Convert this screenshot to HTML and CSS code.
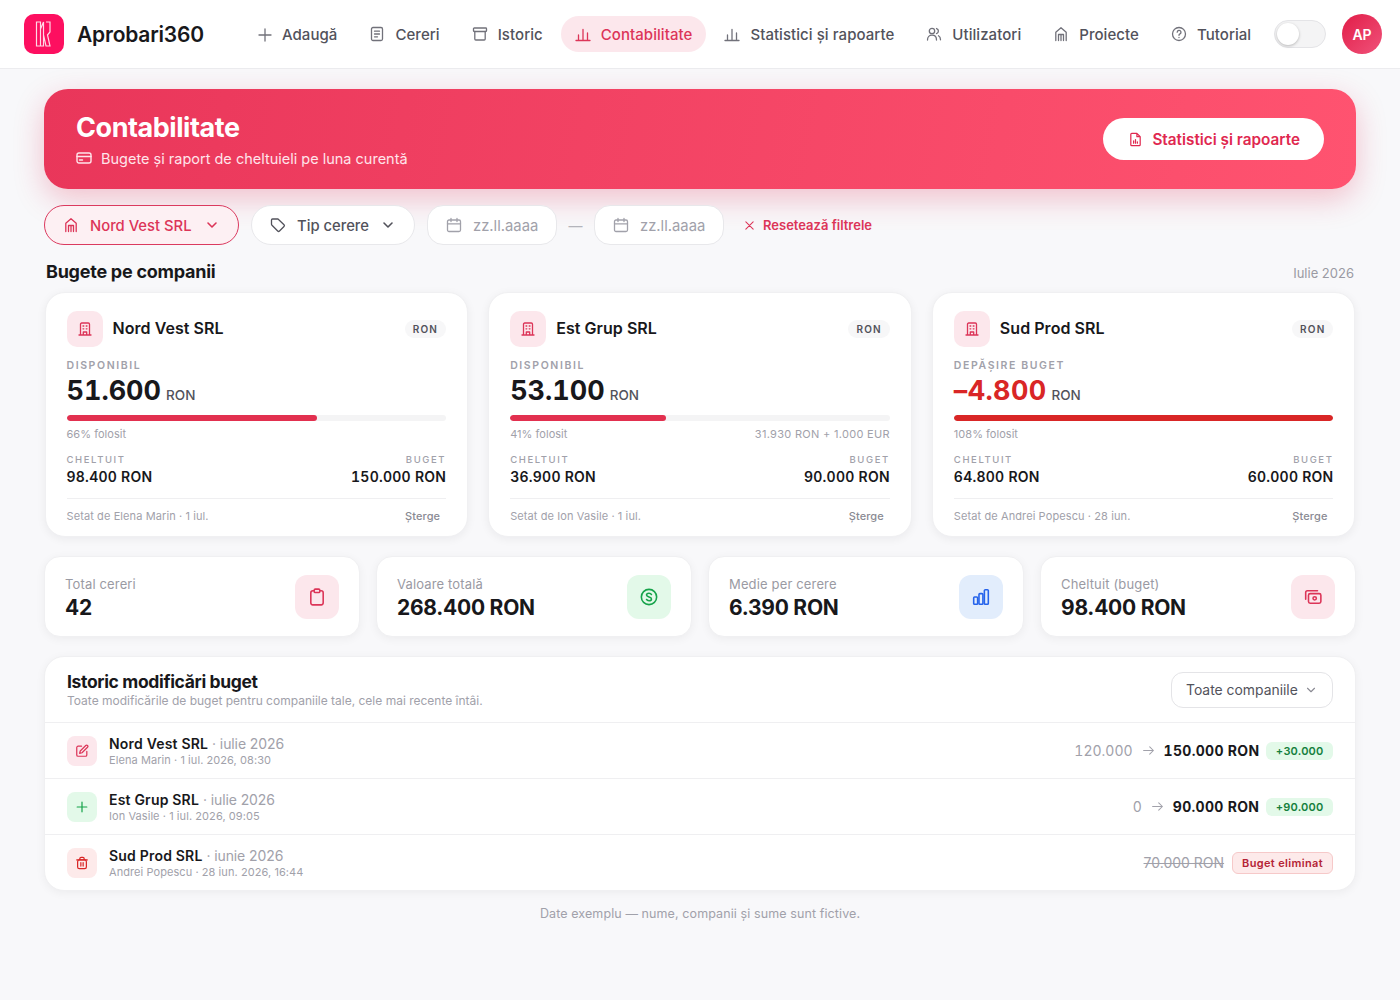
FILE: index.html
```html
<!DOCTYPE html>
<html lang="ro">
<head>
  <meta charset="UTF-8" />
  <meta name="viewport" content="width=device-width, initial-scale=1.0" />
  <title>Contabilitate - Aprobari360</title>
  <link rel="stylesheet" href="styles.css">
</head>
<body>
  <svg class="sprite" width="0" height="0">
    <symbol id="i-build" viewBox="0 0 16 16"><path d="M3.500 14V3.200c0-.7.500-1.200 1.200-1.200h6.600c.7 0 1.200.5 1.200 1.200V14M2 14h12M6.300 14v-3h3.400v3M6 5h.8M9.200 5h.8M6 7.800h.8M9.200 7.800h.8"/></symbol>
    <symbol id="i-proj" viewBox="0 0 16 16"><path d="M2.800 14.500V6.300L8 1.800l5.200 4.500v8.200M5.500 14.500V8.500h5v6M8 8.500v6"/></symbol>
    <symbol id="i-chart" viewBox="0 0 16 16"><path d="M1 14.500h14M3.500 14.500V9M8 14.500V3.500M12.500 14.500V7"/></symbol>
    <symbol id="i-cal" viewBox="0 0 16 16"><rect x="1.500" y="3" width="13" height="11.500" rx="1.500"/><path d="M1.500 6.800h13M5 1.500v3M11 1.500v3"/></symbol>
    <symbol id="i-chev" viewBox="0 0 16 16"><path d="M4 6l4 4 4-4"/></symbol>
  </svg>

  <header class="topbar">
    <a class="brand">
      <span class="brand-logo">
        <svg viewBox="0 0 28 28" width="28" height="28"><path d="M6.500 2h4v24h-4zM10.500 9l3-7v24h-3M16 2h4v10l-2.500 3 2.500 11h-4l-2.500-11V2"/></svg>
      </span>
      <span class="brand-name">Aprobari360</span>
    </a>
    <nav class="nav">
      <a class="nav-item"><svg class="ico" viewBox="0 0 16 16"><path d="M9 3v12M3 9h12"/></svg>Adaugă</a>
      <a class="nav-item"><svg class="ico" viewBox="0 0 16 16"><rect x="2.500" y="1.500" width="11" height="13" rx="1.500"/><path d="M5.500 5.200h5M5.500 8h5M5.500 10.800h3"/></svg>Cereri</a>
      <a class="nav-item"><svg class="ico" viewBox="0 0 16 16"><rect x="1.500" y="2" width="13" height="3.500" rx=".8"/><path d="M2.800 5.500V13c0 .6.400 1 1 1h8.400c.6 0 1-.4 1-1V5.500"/></svg>Istoric</a>
      <a class="nav-item active"><svg class="ico"><use href="#i-chart"/></svg>Contabilitate</a>
      <a class="nav-item"><svg class="ico"><use href="#i-chart"/></svg>Statistici și rapoarte</a>
      <a class="nav-item"><svg class="ico" viewBox="0 0 16 16"><circle cx="6" cy="5" r="2.700"/><path d="M1.500 14c0-3 2-4.800 4.500-4.800s4.500 1.800 4.500 4.800M10.500 2.500a2.600 2.600 0 0 1 0 5M12.500 9.800c1.300.7 2 2.200 2 4"/></svg>Utilizatori</a>
      <a class="nav-item"><svg class="ico"><use href="#i-proj"/></svg>Proiecte</a>
      <a class="nav-item"><svg class="ico" viewBox="0 0 16 16"><circle cx="8" cy="8" r="6.500"/><path d="M6.200 6.200a1.900 1.900 0 1 1 2.800 1.700c-.6.300-1 .7-1 1.400M8 11.400v.1"/></svg>Tutorial</a>
    </nav>
    <span class="toggle"><span class="knob"></span></span>
    <span class="avatar">AP</span>
  </header>

  <main class="page">
    <section class="hero">
      <div class="hero-text">
        <h1>Contabilitate</h1>
        <p class="hero-sub">
          <svg class="ico" viewBox="0 0 16 16"><rect x="1" y="3" width="14" height="10" rx="2"/><path d="M1 6.500h14M3.500 10h3"/></svg>
          Bugete și raport de cheltuieli pe luna curentă
        </p>
      </div>
      <button class="hero-btn" type="button">
        <svg class="ico" viewBox="0 0 16 16"><path d="M3 2.500c0-.6.400-1 1-1h5.500L13 5v8.500c0 .6-.4 1-1 1H4c-.6 0-1-.4-1-1zM9.500 1.500V5H13M6 12V9.500M8 12V8M10 12v-1.500"/></svg>
        Statistici și rapoarte
      </button>
    </section>

    <section class="filters">
      <button class="chip chip-active" type="button"><svg class="ico"><use href="#i-proj"/></svg><span>Nord Vest SRL</span><svg class="ico chev"><use href="#i-chev"/></svg></button>
      <button class="chip" type="button"><svg class="ico" viewBox="0 0 16 16"><path d="M1.500 3v4.200c0 .4.200.8.500 1.100l5.700 5.700c.5.500 1.300.500 1.800 0l4.500-4.500c.5-.5.500-1.300 0-1.800L8 2H2.500c-.6 0-1 .4-1 1z"/></svg><span>Tip cerere</span><svg class="ico chev"><use href="#i-chev"/></svg></button>
      <div class="date"><svg class="ico"><use href="#i-cal"/></svg><span>zz.ll.aaaa</span></div>
      <span class="dash">—</span>
      <div class="date"><svg class="ico"><use href="#i-cal"/></svg><span>zz.ll.aaaa</span></div>
      <a class="reset"><svg class="ico" viewBox="0 0 16 16"><path d="M3.500 3.500l9 9M12.500 3.500l-9 9"/></svg>Resetează filtrele</a>
    </section>

    <div class="section-head">
      <h2>Bugete pe companii</h2>
      <span class="period">Iulie 2026</span>
    </div>

    <section class="budgets">
      <article class="card">
        <div class="card-top">
          <span class="card-icon"><svg class="ico"><use href="#i-build"/></svg></span>
          <h3>Nord Vest SRL</h3>
          <span class="cur">RON</span>
        </div>
        <div class="lbl">DISPONIBIL</div>
        <div class="amount"><span>51.600</span><small>RON</small></div>
        <div class="bar"><div class="fill" style="width: 66%"></div></div>
        <div class="bar-note"><span>66% folosit</span></div>
        <div class="pair">
          <div><div class="lbl-sm">CHELTUIT</div><strong>98.400 RON</strong></div>
          <div class="right"><div class="lbl-sm">BUGET</div><strong>150.000 RON</strong></div>
        </div>
        <div class="card-foot"><span>Setat de Elena Marin · 1 iul.</span><a>Șterge</a></div>
      </article>

      <article class="card">
        <div class="card-top">
          <span class="card-icon"><svg class="ico"><use href="#i-build"/></svg></span>
          <h3>Est Grup SRL</h3>
          <span class="cur">RON</span>
        </div>
        <div class="lbl">DISPONIBIL</div>
        <div class="amount"><span>53.100</span><small>RON</small></div>
        <div class="bar"><div class="fill" style="width: 41%"></div></div>
        <div class="bar-note"><span>41% folosit</span><span class="mixed">31.930 RON + 1.000 EUR</span></div>
        <div class="pair">
          <div><div class="lbl-sm">CHELTUIT</div><strong>36.900 RON</strong></div>
          <div class="right"><div class="lbl-sm">BUGET</div><strong>90.000 RON</strong></div>
        </div>
        <div class="card-foot"><span>Setat de Ion Vasile · 1 iul.</span><a>Șterge</a></div>
      </article>

      <article class="card over">
        <div class="card-top">
          <span class="card-icon"><svg class="ico"><use href="#i-build"/></svg></span>
          <h3>Sud Prod SRL</h3>
          <span class="cur">RON</span>
        </div>
        <div class="lbl">DEPĂȘIRE BUGET</div>
        <div class="amount"><em>–4.800</em><small>RON</small></div>
        <div class="bar"><div class="fill" style="width: 100%"></div></div>
        <div class="bar-note"><span>108% folosit</span></div>
        <div class="pair">
          <div><div class="lbl-sm">CHELTUIT</div><strong>64.800 RON</strong></div>
          <div class="right"><div class="lbl-sm">BUGET</div><strong>60.000 RON</strong></div>
        </div>
        <div class="card-foot"><span>Setat de Andrei Popescu · 28 iun.</span><a>Șterge</a></div>
      </article>
    </section>

    <section class="stats">
      <div class="stat">
        <div class="stat-text"><div class="stat-label">Total cereri</div><div class="stat-value">42</div></div>
        <span class="stat-icon rose"><svg class="ico" viewBox="0 0 16 16"><rect x="2.500" y="2.500" width="11" height="12.500" rx="1.800"/><rect x="5.500" y="1" width="5" height="3" rx="1" class="solid-bg"/></svg></span>
      </div>
      <div class="stat">
        <div class="stat-text"><div class="stat-label">Valoare totală</div><div class="stat-value">268.400 RON</div></div>
        <span class="stat-icon green"><svg class="ico" viewBox="0 0 16 16"><circle cx="8" cy="8" r="6.800"/><path d="M10.200 5.800C9.800 5 9 4.700 8 4.700c-1.200 0-2.200.6-2.200 1.600C5.800 8.400 10.200 7.600 10.200 9.700c0 1-1 1.600-2.200 1.600-1 0-1.800-.3-2.200-1.100"/></svg></span>
      </div>
      <div class="stat">
        <div class="stat-text"><div class="stat-label">Medie per cerere</div><div class="stat-value">6.390 RON</div></div>
        <span class="stat-icon blue"><svg class="ico" viewBox="0 0 16 16"><rect x="1.500" y="8" width="3.500" height="6.500" rx=".8"/><rect x="6.200" y="5" width="3.500" height="9.500" rx=".8"/><rect x="11" y="1.500" width="3.500" height="13" rx=".8"/></svg></span>
      </div>
      <div class="stat">
        <div class="stat-text"><div class="stat-label">Cheltuit (buget)</div><div class="stat-value">98.400 RON</div></div>
        <span class="stat-icon rose"><svg class="ico" viewBox="0 0 16 16"><rect x="4" y="5" width="11" height="8.500" rx="1.500"/><circle cx="9.500" cy="9.200" r="1.500"/><path d="M12 2.500H3C2 2.500 1.500 3 1.500 4v6"/></svg></span>
      </div>
    </section>

    <section class="history">
      <div class="history-head">
        <div>
          <h2>Istoric modificări buget</h2>
          <p>Toate modificările de buget pentru companiile tale, cele mai recente întâi.</p>
        </div>
        <div class="select">Toate companiile<svg class="ico"><use href="#i-chev"/></svg></div>
      </div>

      <div class="row">
        <span class="row-icon rose"><svg class="ico" viewBox="0 0 16 16"><path d="M7.500 2.500H3.500c-.8 0-1.500.7-1.500 1.500v8.500c0 .8.700 1.500 1.500 1.500H12c.8 0 1.500-.7 1.500-1.500V8.500"/><path d="M12.300 1.700a1.400 1.400 0 0 1 2 2L8 10l-2.700.7L6 8z"/></svg></span>
        <div class="row-text">
          <div class="row-title"><b>Nord Vest SRL</b> · iulie 2026</div>
          <div class="row-sub">Elena Marin · 1 iul. 2026, 08:30</div>
        </div>
        <div class="row-end"><span class="old">120.000</span><svg class="ico arrow" viewBox="0 0 16 16"><path d="M2 8h12M9.500 3.500 14 8l-4.500 4.500"/></svg><strong>150.000 RON</strong><span class="delta">+30.000</span></div>
      </div>

      <div class="row">
        <span class="row-icon green"><svg class="ico" viewBox="0 0 16 16"><path d="M8 2.500v11M2.500 8h11"/></svg></span>
        <div class="row-text">
          <div class="row-title"><b>Est Grup SRL</b> · iulie 2026</div>
          <div class="row-sub">Ion Vasile · 1 iul. 2026, 09:05</div>
        </div>
        <div class="row-end"><span class="old">0</span><svg class="ico arrow" viewBox="0 0 16 16"><path d="M2 8h12M9.500 3.500 14 8l-4.500 4.500"/></svg><strong>90.000 RON</strong><span class="delta">+90.000</span></div>
      </div>

      <div class="row">
        <span class="row-icon red"><svg class="ico" viewBox="0 0 16 16"><rect x="3" y="4.500" width="10" height="10" rx="2"/><path d="M2 4.500h12M5.500 4.500V3c0-.8.700-1.500 1.500-1.500h2c.8 0 1.500.7 1.500 1.500v1.500M6.700 7.500v4M9.300 7.500v4"/></svg></span>
        <div class="row-text">
          <div class="row-title"><b>Sud Prod SRL</b> · iunie 2026</div>
          <div class="row-sub">Andrei Popescu · 28 iun. 2026, 16:44</div>
        </div>
        <div class="row-end"><s class="struck">70.000 RON</s><span class="removed">Buget eliminat</span></div>
      </div>
    </section>

    <p class="note">Date exemplu — nume, companii și sume sunt fictive.</p>
  </main>
</body>
</html>
```

FILE: styles.css
```css
* {
  box-sizing: border-box;
}
body {
  margin: 0;
  min-height: 1000px;
  background-color: #f8f8fa;
  font-family: Inter, 'Liberation Sans', sans-serif;
  color: #18181b;
}
h1, h2, h3, p {
  margin: 0;
}
.sprite {
  position: absolute;
}
.ico {
  width: 16px;
  height: 16px;
  flex: none;
  fill: none;
  stroke: currentColor;
  stroke-width: 1.3;
  stroke-linecap: round;
  stroke-linejoin: round;
}

/* top bar */
.topbar {
  height: 69px;
  display: flex;
  align-items: center;
  padding: 0 18px 0 24px;
  background-color: #ffffff;
  border-bottom: 1px solid #ececef;
}
.brand {
  display: flex;
  align-items: center;
  gap: 13px;
}
.brand-logo {
  width: 40px;
  height: 40px;
  border-radius: 10px;
  background-color: #fd0f60;
  display: flex;
  align-items: center;
  justify-content: center;
}
.brand-logo svg {
  fill: none;
  stroke: #ffd9e6;
  stroke-width: 1.2;
}
.brand-name {
  font-size: 21px;
  font-weight: 600;
  letter-spacing: -0.2px;
}
.nav {
  display: flex;
  align-items: center;
  margin-left: 38px;
}
.nav-item {
  display: flex;
  align-items: center;
  gap: 10px;
  height: 36px;
  padding: 0 14px;
  margin-right: 4px;
  border-radius: 18px;
  font-size: 15px;
  font-weight: 500;
  letter-spacing: 0.06px;
  color: #52525b;
  white-space: nowrap;
}
.nav-item .ico {
  color: #71717a;
}
.nav-item.active,
.nav-item.active .ico {
  color: #dc3558;
}
.nav-item.active {
  background-color: #fce7ec;
}
.toggle {
  width: 52px;
  height: 28px;
  margin-left: 5px;
  padding: 2px;
  border-radius: 14px;
  background-color: #f4f4f5;
  border: 1px solid #e4e4e7;
}
.knob {
  display: block;
  width: 22px;
  height: 22px;
  border-radius: 50%;
  background-color: #ffffff;
  box-shadow: 0 1px 3px rgba(0, 0, 0, 0.25);
}
.avatar {
  width: 40px;
  height: 40px;
  margin-left: 16px;
  border-radius: 50%;
  background: linear-gradient(135deg, #e11d48, #f0527a);
  color: #ffffff;
  font-size: 14px;
  font-weight: 600;
  display: flex;
  align-items: center;
  justify-content: center;
}

/* page */
.page {
  padding: 20px 44px;
}
.hero {
  height: 100px;
  padding: 0 32px;
  display: flex;
  align-items: center;
  justify-content: space-between;
  border-radius: 24px;
  background: linear-gradient(100deg, #e9365a, #ff5370);
  box-shadow: 0 10px 30px rgba(225, 29, 72, 0.25);
  color: #ffffff;
}
.hero-text {
  padding-bottom: 2px;
}
.hero h1 {
  font-size: 27px;
  font-weight: 700;
  line-height: 36px;
  letter-spacing: -0.45px;
}
.hero-sub {
  display: flex;
  align-items: center;
  gap: 9px;
  margin-top: 4px;
  font-size: 14.500px;
  color: #ffe4ea;
}
.hero-sub .ico {
  stroke-width: 1.4;
}
.hero-btn {
  height: 42px;
  padding: 0 24px 0 25px;
  display: flex;
  align-items: center;
  gap: 9px;
  border: none;
  border-radius: 21px;
  background-color: #ffffff;
  color: #e0284f;
  font: 600 15.300px Inter, sans-serif;
}
.hero-btn .ico {
  width: 15px;
  height: 15px;
}

/* filters */
.filters {
  display: flex;
  align-items: center;
  margin-top: 16px;
  height: 40px;
}
.chip {
  height: 40px;
  display: flex;
  align-items: center;
  padding: 0 18px;
  margin-right: 12px;
  border: 1px solid #e8e8eb;
  border-radius: 20px;
  background-color: #ffffff;
  color: #52525b;
  font: 500 14.800px Inter, sans-serif;
}
.chip span,
.date span {
  padding-top: 1px;
}
.chip .ico {
  margin-right: 11px;
}
.chip .chev {
  margin: 0 0 0 11px;
  stroke-width: 1.6;
}
.chip-active {
  width: 195px;
  background-color: #fdf0f3;
  border-color: #db3a5f;
  color: #dc3558;
}
.chip-active .chev {
  margin-left: auto;
}
.date {
  width: 130px;
  height: 40px;
  display: flex;
  align-items: center;
  gap: 11px;
  padding-left: 18px;
  border: 1px solid #e8e8eb;
  border-radius: 16px;
  background-color: #ffffff;
  color: #a1a1aa;
  font-size: 14.800px;
}
.dash {
  width: 37px;
  text-align: center;
  color: #b4b4bb;
  font-size: 14px;
}
.reset {
  display: flex;
  align-items: center;
  gap: 7px;
  margin-left: 19px;
  color: #dc3558;
  font-size: 13px;
  font-weight: 600;
}
.reset .ico {
  width: 13px;
  height: 13px;
}
.section-head {
  display: flex;
  align-items: center;
  justify-content: space-between;
  margin-top: 14px;
  height: 24px;
  padding: 0 2px;
}
.section-head h2 {
  font-size: 18px;
  font-weight: 700;
  letter-spacing: -0.25px;
}
.period {
  margin-top: 4px;
  font-size: 13px;
  color: #9a9aa3;
}

/* budget cards */
.budgets {
  display: grid;
  grid-template-columns: repeat(3, 1fr);
  gap: 20px;
  margin: 9px 0.5px 0;
}
.card {
  height: 245px;
  padding: 18px 21px 0;
  border: 1px solid #f0f0f2;
  border-radius: 20px;
  background-color: #ffffff;
  box-shadow: 0 2px 10px rgba(24, 24, 27, 0.06);
}
.card-top {
  display: flex;
  align-items: center;
  gap: 10px;
}
.card-top h3 {
  flex: 1;
  padding-bottom: 2px;
  font-size: 16px;
  font-weight: 600;
  letter-spacing: 0.05px;
}
.card-icon {
  width: 36px;
  height: 36px;
  border-radius: 10px;
  background-color: #fce7ec;
  color: #dc3558;
  display: flex;
  align-items: center;
  justify-content: center;
}
.cur {
  padding: 3px 8px;
  border-radius: 10px;
  background-color: #f7f7f8;
  color: #52525b;
  font-size: 10px;
  font-weight: 600;
  letter-spacing: 1.2px;
}
.lbl {
  margin-top: 12px;
  font-size: 10.500px;
  font-weight: 600;
  letter-spacing: 1.6px;
  line-height: 14px;
  color: #a1a1aa;
}
.amount {
  display: flex;
  align-items: baseline;
  gap: 5px;
  margin-top: 2px;
  font-size: 27px;
  font-weight: 700;
  line-height: 32px;
  font-variant-numeric: tabular-nums;
}
.amount small {
  font-size: 13.500px;
  font-weight: 500;
  color: #52525b;
}
.amount em {
  font-style: normal;
  letter-spacing: 0.35px;
  color: #d92626;
}
.bar {
  height: 6px;
  margin-top: 4px;
  border-radius: 3px;
  background-color: #f4f4f5;
  overflow: hidden;
}
.fill {
  height: 100%;
  border-radius: 3px;
  background-color: #e2304f;
}
.over .fill {
  background-color: #d92626;
}
.bar-note {
  display: flex;
  justify-content: space-between;
  margin-top: 7px;
  font-size: 11px;
  line-height: 13px;
  letter-spacing: 0.03px;
  color: #a1a1aa;
}
.mixed {
  letter-spacing: 0.3px;
}
.pair {
  display: flex;
  justify-content: space-between;
  margin-top: 13px;
}
.pair strong {
  display: block;
  margin-top: 2px;
  font-size: 14px;
  font-weight: 600;
  line-height: 18px;
  letter-spacing: 0.25px;
  font-variant-numeric: tabular-nums;
}
.right {
  text-align: right;
}
.lbl-sm {
  font-size: 9.500px;
  font-weight: 500;
  line-height: 12px;
  letter-spacing: 1.6px;
  color: #a1a1aa;
}
.card-foot {
  display: flex;
  justify-content: space-between;
  margin-top: 12px;
  padding: 10px 6px 0 0;
  border-top: 1px solid #efeff1;
  font-size: 11px;
  line-height: 14px;
  letter-spacing: 0.1px;
  color: #a1a1aa;
}
.card-foot a {
  font-size: 11px;
  font-weight: 500;
  color: #8a8a93;
}

/* stats */
.stats {
  display: grid;
  grid-template-columns: repeat(4, 1fr);
  gap: 16px;
  margin-top: 19px;
}
.stat {
  height: 81px;
  padding: 0 20px;
  display: flex;
  align-items: center;
  justify-content: space-between;
  border: 1px solid #f0f0f2;
  border-radius: 16px;
  background-color: #ffffff;
  box-shadow: 0 2px 10px rgba(24, 24, 27, 0.05);
}
.stat-text {
  padding-top: 4px;
}
.stat-label {
  font-size: 13px;
  line-height: 16px;
  letter-spacing: 0.15px;
  color: #9a9aa3;
}
.stat-value {
  margin-top: 3px;
  font-size: 21px;
  font-weight: 700;
  line-height: 26px;
  letter-spacing: -0.25px;
}
.stat-icon {
  width: 44px;
  height: 44px;
  border-radius: 12px;
  display: flex;
  align-items: center;
  justify-content: center;
}
.stat-icon .ico {
  width: 18px;
  height: 18px;
  stroke-width: 1.4;
}
.solid-bg {
  fill: #fce7ec;
}
.rose {
  background-color: #fce7ec;
  color: #dc3558;
}
.green {
  background-color: #e3f9e9;
  color: #16a34a;
}
.blue {
  background-color: #e2edfc;
  color: #2563eb;
}
.red {
  background-color: #fdeaea;
  color: #d92626;
}

/* history */
.history {
  margin-top: 19px;
  border: 1px solid #f0f0f2;
  border-radius: 20px;
  background-color: #ffffff;
  box-shadow: 0 2px 10px rgba(24, 24, 27, 0.05);
}
.history-head {
  height: 65px;
  padding: 0 22px;
  display: flex;
  align-items: center;
  justify-content: space-between;
}
.history-head h2 {
  margin-bottom: 1px;
  font-size: 17.500px;
  font-weight: 700;
  line-height: 21px;
  letter-spacing: -0.35px;
}
.history-head p {
  font-size: 12px;
  line-height: 16px;
  color: #a1a1aa;
}
.select {
  width: 162px;
  height: 36px;
  display: flex;
  align-items: center;
  justify-content: space-between;
  padding: 0 14px;
  border: 1px solid #e4e4e7;
  border-radius: 12px;
  font-size: 13.900px;
  color: #52525b;
}
.select .ico {
  width: 14px;
  height: 14px;
  color: #8a8a93;
}
.row {
  height: 56px;
  padding: 0 22px;
  display: flex;
  align-items: center;
  gap: 12px;
  border-top: 1px solid #efeff1;
}
.row-icon {
  width: 30px;
  height: 30px;
  border-radius: 8px;
  display: flex;
  align-items: center;
  justify-content: center;
}
.row-icon .ico {
  width: 14px;
  height: 14px;
  stroke-width: 1.4;
}
.row-text {
  flex: 1;
}
.row-title {
  font-size: 14px;
  line-height: 17px;
  letter-spacing: -0.1px;
  color: #a1a1aa;
}
.row-title b {
  font-weight: 600;
  letter-spacing: 0.2px;
  color: #18181b;
}
.row-sub {
  margin-top: 1px;
  font-size: 11px;
  line-height: 14px;
  letter-spacing: 0.07px;
  color: #a1a1aa;
}
.row-end {
  display: flex;
  align-items: center;
  font-size: 14px;
}
.old {
  color: #a1a1aa;
  font-variant-numeric: tabular-nums;
}
.arrow {
  width: 13px;
  height: 13px;
  margin: 0 9px;
  color: #a1a1aa;
}
.row-end strong {
  font-weight: 700;
  letter-spacing: 0.3px;
  font-variant-numeric: tabular-nums;
}
.delta {
  margin-left: 7px;
  padding: 2px 9.500px;
  border-radius: 6px;
  background-color: #e3f9e9;
  color: #15803d;
  font-size: 11px;
  font-weight: 600;
  letter-spacing: 0.2px;
}
.struck {
  font-size: 14px;
  color: #a1a1aa;
}
.removed {
  margin-left: 8px;
  padding: 3px 9px;
  border: 1px solid #f6c9c9;
  border-radius: 6px;
  background-color: #fdeaea;
  color: #b42336;
  font-size: 11px;
  font-weight: 600;
  letter-spacing: 0.35px;
}
.note {
  margin-top: 15px;
  text-align: center;
  font-size: 12.500px;
  letter-spacing: 0.1px;
  color: #a1a1aa;
}
```
